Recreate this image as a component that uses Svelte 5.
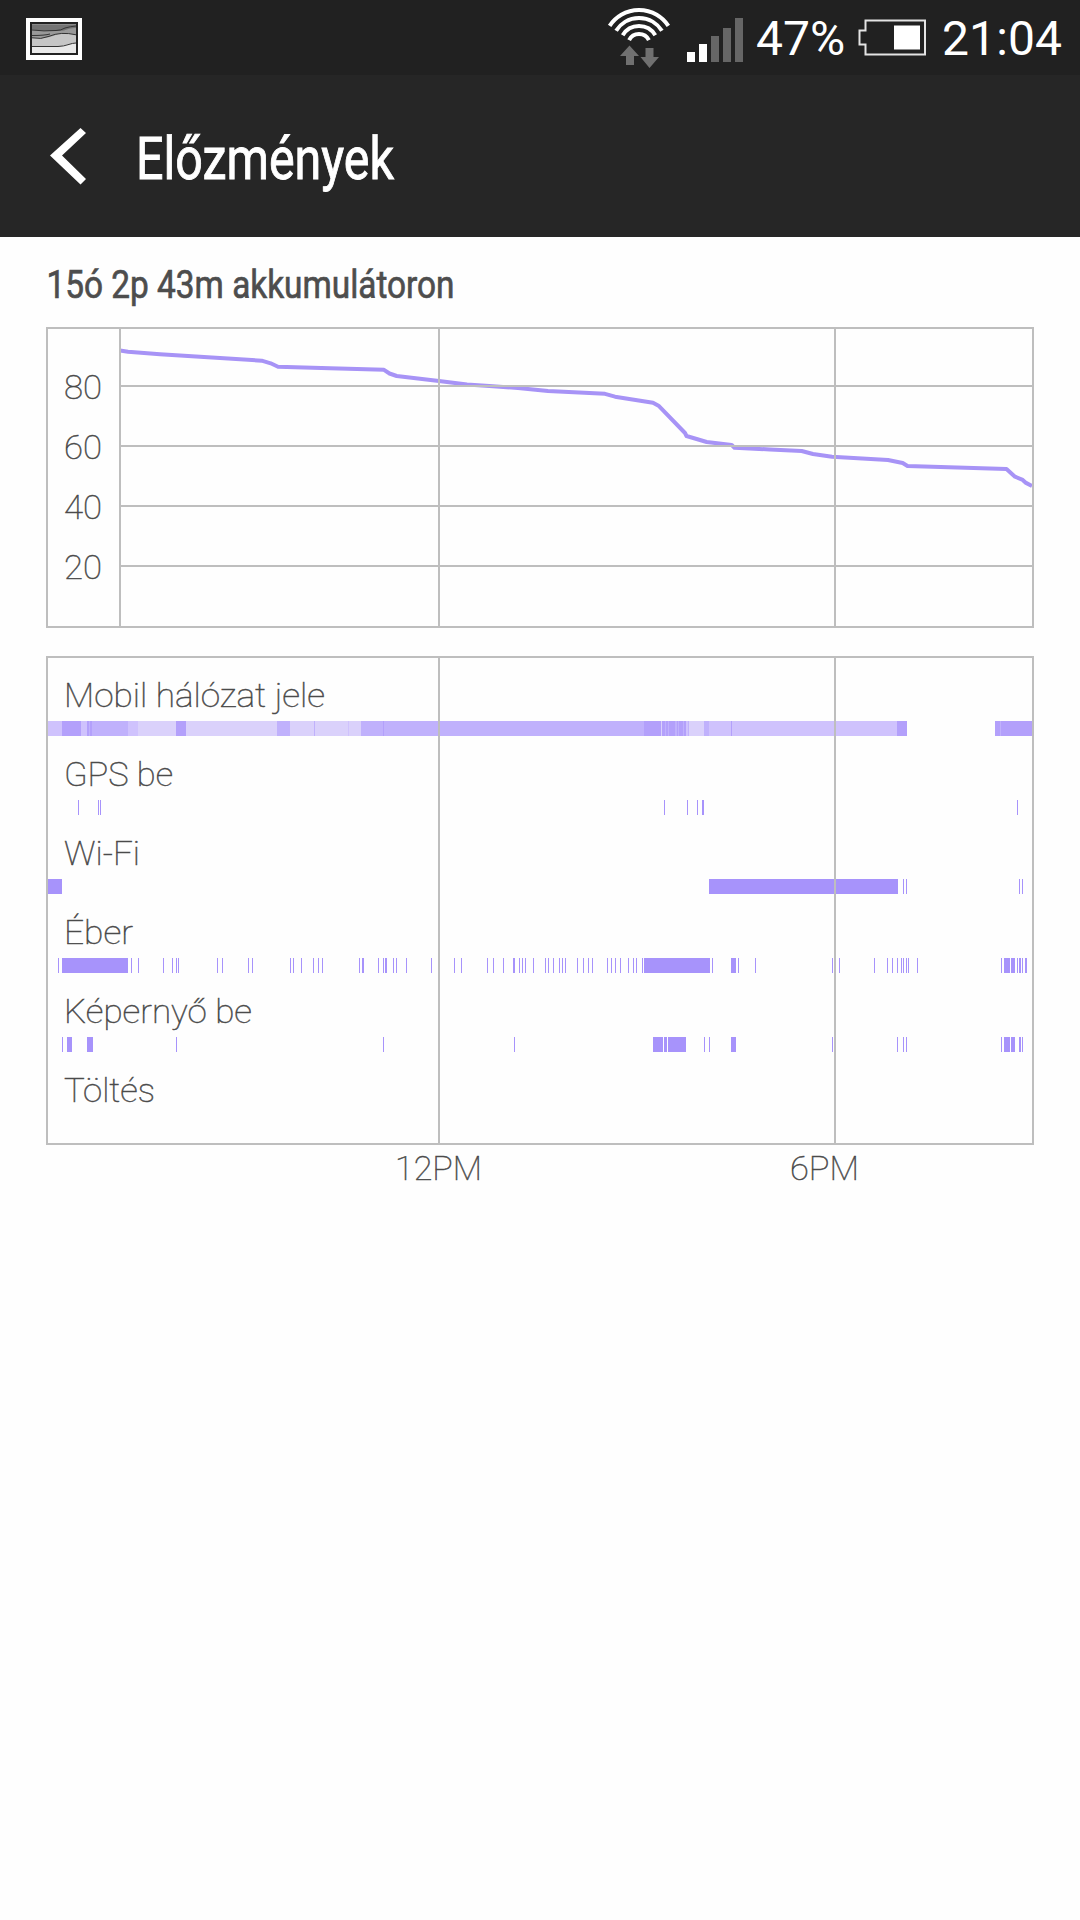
<script lang="ts">
	const title = 'Előzmények';
	const subtitle = '15ó 2p 43m akkumulátoron';

	// vertical rules shared by both charts
	const hours = [
		{ x: 439, label: '12PM', textX: 438.5, width: 87 },
		{ x: 835, label: '6PM', textX: 824.5, width: 69 }
	];

	const levels = [
		{ value: 80, y: 386 },
		{ value: 60, y: 446 },
		{ value: 40, y: 506 },
		{ value: 20, y: 566 }
	];

	const battery = [
		[120, 350.5], [128, 351.7], [160, 354.3], [220, 358], [261.7, 360.7], [270.7, 363.3],
		[278, 366.7], [330, 368.3], [384, 369.8], [389.5, 373.5], [396.7, 376], [439, 380.9],
		[467, 384.5], [493, 386.3], [518, 388], [548, 391], [605, 393.8], [615, 396.7],
		[653, 402.7], [658.5, 405.7], [685, 433], [686.5, 436], [706.7, 442], [731.7, 445],
		[734.5, 447.7], [770, 449.5], [801.7, 451], [813, 454], [832, 456.8], [888, 460],
		[902.7, 463], [907.5, 466], [1006.5, 469], [1015, 476.7], [1022.7, 479.9], [1026, 482.9], [1032, 486]
	];

	const points = battery.map((p) => p.join(',')).join(' ');

	// [start, end, signal strength]
	const signal = [
		[48, 62, 1], [62, 81, 3], [81, 87, 1], [87, 89, 3], [89, 90, 2], [90, 92, 3], [92, 95, 2],
		[95, 128, 2], [128, 138, 1], [138, 176, 0], [176, 186, 3], [186, 277, 0], [277, 290, 2],
		[290, 314, 0], [314, 315, 2], [315, 348, 0], [348, 349, 1], [349, 361, 0], [361, 383, 2],
		[383, 384, 3], [384, 644, 2], [644, 661, 3], [661, 662, 0], [662, 665, 3], [665, 666, 2],
		[666, 668, 3], [668, 669, 2], [669, 675, 3], [675, 677, 2], [677, 678, 3], [678, 679, 2],
		[679, 683, 3], [683, 684, 2], [684, 686, 3], [686, 688, 1], [688, 689, 2], [689, 704, 0],
		[704, 709, 2], [709, 731, 1], [731, 732, 3], [732, 897, 1], [897, 907, 3], [995, 1000, 3],
		[1000, 1001, 2], [1001, 1032, 3]
	];

	// a single number is a one pixel tick, a pair is a span
	type Mark = number | number[];

	const rows: { label: string; width: number; marks: Mark[] }[] = [
		{ label: 'Mobil hálózat jele', width: 261, marks: [] },
		{ label: 'GPS be', width: 109, marks: [78, 98, 100, 664, 687, 697, [702, 704], 1017] },
		{ label: 'Wi-Fi', width: 76, marks: [[48, 62], [709, 898], 903, 906, 1019, 1022] },
		{
			label: 'Éber',
			width: 69,
			marks: [
				58, [62, 128], 131, 138, 163, 172, 176, 178, 217, 222, 248, 252, 290, 293, 301, 313,
				318, 322, 359, [362, 364], 378, 383, [385, 387], 393, 396, 406, 431, 454, 461, 487,
				493, 503, [513, 515], 519, 522, 525, 533, 545, 548, 553, 559, 562, 565, 577, 583, 588,
				592, 607, 611, 615, 620, 628, 633, 636, 642, [644, 710], 712, [731, 736], 738, 755,
				832, 839, 874, 887, 892, 897, 901, 903, 906, 908, 917, 1001, [1004, 1010],
				[1011, 1015], 1017, [1019, 1021], 1022, [1025, 1027]
			]
		},
		{
			label: 'Képernyő be',
			width: 188,
			marks: [
				62, [67, 72], [87, 93], 176, 383, 514, [653, 663], [664, 667], [668, 686], 704, 709,
				[731, 736], 832, 897, 903, 906, 1001, [1004, 1010], [1011, 1015], [1019, 1021], 1022
			]
		},
		{ label: 'Töltés', width: 91, marks: [] }
	];

	function start(mark: Mark) {
		return typeof mark === 'number' ? mark : mark[0];
	}

	function size(mark: Mark) {
		return typeof mark === 'number' ? 1 : mark[1] - mark[0];
	}

	function arc(r: number, degrees: number) {
		const a = (degrees * Math.PI) / 180;
		const dx = r * Math.sin(a);
		const y = 45 - r * Math.cos(a);
		return `M${31 - dx} ${y}A${r} ${r} 0 0 1 ${31 + dx} ${y}`;
	}
</script>

<div class="screen">
	<div class="status">
		<svg class="picture" width="56" height="42" viewBox="0 0 56 42">
			<path fill="#fff" d="M0 0h56v42H0z" />
			<path fill="#222" d="M4 4h48v33H4z" />
			<path fill="#e9e9e9" d="M6 6.500h44V35H6z" />
			<path fill="#c6c6c6" d="M6 6.500h44V25q-8 .5-16 3.500h-28z" />
			<path fill="#999" d="M6 6.500h44v10.500q-9-3-18-1-10 5-20 4H6z" />
			<path fill="#747474" d="M6 6.500h44V10q-6-.5-12 2.500-11 1.500-32-1z" />
			<path class="wave" d="M6 12q12 1.500 24 .5 5 0 9-2.500 5-1.500 11-2M6 17.500q13 0 18-1.500M6 19.800q9 2 17-1.500 12-5 27-1.500M6 28.500h26q6-.3 10-1.800 5-1.700 8-1.700" />
		</svg>

		<div class="indicators">
			<svg class="wifi" width="62" height="75" viewBox="0 0 62 75">
				<path class="arc" d={arc(35, 57)} />
				<path class="arc" d={arc(27, 58)} />
				<path class="arc" d={arc(19, 59)} />
				<path class="arc" d={arc(11, 64)} />
				<path fill="#707070" d="M21.500 45.500L31 56h-5v9h-8v-9h-6z" />
				<path fill="#707070" d="M37.500 48h8v9h5.500l-9.500 11-9-11h5z" />
			</svg>
			<svg class="signal" width="56" height="75" viewBox="0 0 56 75">
				<path fill="#fff" d="M0 52h8v10H0zM12 44h8v18h-8z" />
				<path fill="#666" d="M24 36h8v26h-8zM36 28h8v34h-8zM48 18h8v44h-8z" />
			</svg>
			<span class="percent">47%</span>
			<svg class="battery" width="69" height="75" viewBox="0 0 69 75">
				<path fill="none" stroke="#e4e4e4" stroke-width="2" d="M7.500 20.500H67v34H7.500v-10H1.500v-14h6z" />
				<path fill="#fff" d="M36 25.500h26v24H36z" />
			</svg>
			<span class="clock">21:04</span>
		</div>
	</div>

	<header>
		<svg class="back" width="36" height="56" viewBox="0 0 36 56">
			<path fill="#fff" d="M30.500 0L36 5 12 27.500 36 51l-5.500 5.500L0 27.500z" />
		</svg>
		<svg class="title" width="400" height="100" viewBox="0 0 400 100">
			<text x="1" y="73" textLength="258" lengthAdjust="spacingAndGlyphs">{title}</text>
		</svg>
	</header>

	<main>
		<svg class="subtitle" width="600" height="60" viewBox="0 0 600 60">
			<text x="-.5" y="40.500" textLength="408" lengthAdjust="spacingAndGlyphs">{subtitle}</text>
		</svg>

		<svg class="chart" width="988" height="301" viewBox="46 327 988 301">
			<polyline class="level" {points} />
			<path class="rule" d="M120 327V628" />
			{#each hours as hour}
				<path class="rule" d="M{hour.x} 327V628" />
			{/each}
			{#each levels as level}
				<path class="rule" d="M119 {level.y}H1034" />
				<text x="64" y={level.y + 12.5} textLength="38" lengthAdjust="spacingAndGlyphs">{level.value}</text>
			{/each}
			<path class="rule" d="M47 328H1033V627H47z" />
		</svg>

		<svg class="chart history" width="988" height="540" viewBox="46 656 988 540">
			{#each signal as [from, to, strength]}
				<rect class="s{strength}" x={from} y="721" width={to - from} height="15" />
			{/each}
			{#each rows as row, i}
				{#each row.marks as mark}
					<rect class="mark" x={start(mark)} y={721 + i * 79} width={size(mark)} height="15" />
				{/each}
				<text x="64" y={707 + i * 79} textLength={row.width} lengthAdjust="spacingAndGlyphs">{row.label}</text>
			{/each}
			{#each hours as hour}
				<path class="rule" d="M{hour.x} 656V1145" />
				<text class="hour" x={hour.textX} y="1180" textLength={hour.width} lengthAdjust="spacingAndGlyphs">{hour.label}</text>
			{/each}
			<path class="rule" d="M47 657H1033V1144H47z" />
		</svg>
	</main>
</div>

<style>
	:global(body) {
		margin: 0;
		background: #fefefe;
	}

	.screen {
		width: 1080px;
		height: 1920px;
		overflow: hidden;
		font-family: Roboto, sans-serif;
		background: #fefefe;
	}

	svg {
		display: block;
		flex: none;
		overflow: visible;
	}

	.status {
		display: flex;
		justify-content: space-between;
		height: 75px;
		padding: 0 18px 0 26px;
		box-sizing: border-box;
		background: #212121;
		color: #fff;
	}

	.picture {
		margin-top: 18px;
	}

	.wave {
		fill: none;
		stroke: #333;
		stroke-width: 1;
	}

	.indicators {
		display: flex;
		font-size: 48px;
		line-height: 78px;
	}

	.arc {
		fill: none;
		stroke: #fff;
		stroke-width: 4;
	}

	.signal {
		margin-left: 17px;
	}

	.percent {
		width: 88px;
		margin-left: 13px;
	}

	.battery {
		margin-left: 14px;
	}

	.clock {
		width: 120px;
		margin-left: 15px;
		letter-spacing: 0.1px;
	}

	header {
		display: flex;
		align-items: center;
		height: 162px;
		padding-left: 50px;
		box-sizing: border-box;
		background: #262626;
	}

	.title {
		margin-left: 49px;
		font-size: 58.5px;
		fill: #fff;
		stroke: #fff;
		stroke-width: 0.9px;
	}

	main {
		padding: 20px 46px 0;
	}

	.subtitle {
		margin-left: 1px;
		font-size: 39.5px;
		fill: #4d4d4d;
		stroke: #4d4d4d;
		stroke-width: 0.7px;
	}

	.chart {
		margin-top: 10px;
		font-size: 34px;
		font-weight: 100;
		fill: #4b4b4b;
	}

	.chart text {
		stroke: #4b4b4b;
		stroke-width: 0.5px;
	}

	.history {
		margin-top: 28px;
	}

	.hour {
		text-anchor: middle;
	}

	.rule {
		fill: none;
		stroke: #bebebe;
		stroke-width: 2;
	}

	.level {
		fill: none;
		stroke: #a793f6;
		stroke-width: 4;
		stroke-linejoin: round;
	}

	.mark {
		fill: #a793fb;
	}

	.s0 {
		fill: #dad1fb;
	}

	.s1 {
		fill: #cfc2fd;
	}

	.s2 {
		fill: #c0b1fc;
	}

	.s3 {
		fill: #b3a0fb;
	}
</style>
